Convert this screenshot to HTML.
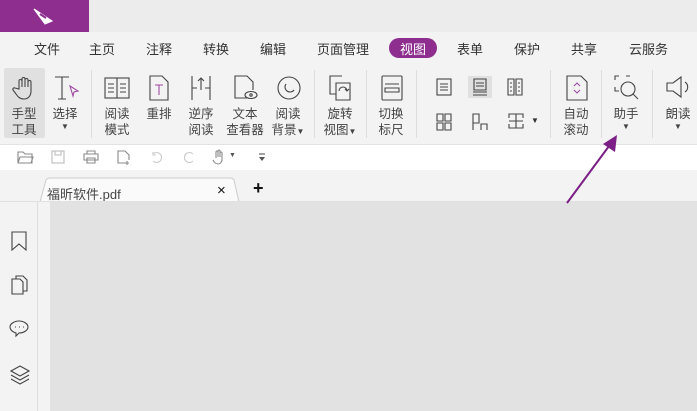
<!DOCTYPE html>
<html><head><meta charset="utf-8"><style>
*{margin:0;padding:0;box-sizing:border-box}
body{width:697px;height:411px;overflow:hidden;background:#f3f3f3;font-family:"Liberation Sans","Noto Sans CJK SC",sans-serif;position:relative;color:#333}
.a{position:absolute}
.m{position:absolute;top:39px;font-size:13px;color:#333}
.t{position:absolute;font-size:12.5px;color:#444;text-align:center;line-height:16px;width:44px}
.sep{position:absolute;top:70px;width:1px;height:68px;background:#ddd}
svg{position:absolute;fill:none;stroke:#444;stroke-width:1.1}
.car{font-size:8px;display:block;line-height:10px}
</style></head><body>
<div class="a" style="left:0;top:0;width:697px;height:32px;background:#ececec"></div>
<div class="a" style="left:0;top:0;width:89px;height:32px;background:#8e2f8f"></div>
<svg style="left:32px;top:6px" width="24" height="20" viewBox="0 0 24 20"><path d="M2 3 L20 15 L13 18 Z" fill="#fff" stroke="#fff"/><path d="M8 8 L14 12" stroke="#8e2f8f" stroke-width="2"/></svg>

<span class="m" style="left:34px">文件</span>
<span class="m" style="left:89px">主页</span>
<span class="m" style="left:146px">注释</span>
<span class="m" style="left:203px">转换</span>
<span class="m" style="left:260px">编辑</span>
<span class="m" style="left:317px">页面管理</span>
<div class="a" style="left:389px;top:38px;width:48px;height:20px;border-radius:10px;background:#8e2f8f"></div>
<span class="m" style="left:400px;color:#fff">视图</span>
<span class="m" style="left:457px">表单</span>
<span class="m" style="left:514px">保护</span>
<span class="m" style="left:571px">共享</span>
<span class="m" style="left:629px">云服务</span>

<div class="a" style="left:4px;top:68px;width:41px;height:70px;background:#e0e0e0;border-radius:2px"></div>
<svg style="left:12px;top:75px" width="26" height="26" viewBox="0 0 26 26"><path d="M7 14V6a1.5 1.5 0 013 0v6V4a1.5 1.5 0 013 0v8V5a1.5 1.5 0 013 0v7V7a1.5 1.5 0 013 0v9c0 5-3 8-7 8s-6-2-8-5l-3-4a1.5 1.5 0 012-2z"/></svg>
<div class="t" style="left:2px;top:106px">手型<br>工具</div>
<svg style="left:53px;top:75px" width="28" height="26" viewBox="0 0 28 26"><path d="M2 2h14M9 2v22M5 24h8"/><path d="M17 11l8 5-4 1-1 4z" stroke="#a04aa5"/></svg>
<div class="t" style="left:43px;top:106px">选择<span class="car">▼</span></div>
<div class="sep" style="left:91px"></div>
<svg style="left:104px;top:76px" width="26" height="24" viewBox="0 0 26 24"><rect x="1" y="2" width="24" height="20"/><path d="M13 2v20M4 8h6M4 12h6M4 16h6M16 8h6M16 12h6M16 16h6"/></svg>
<div class="t" style="left:95px;top:106px">阅读<br>模式</div>
<svg style="left:149px;top:75px" width="20" height="26" viewBox="0 0 20 26"><path d="M1 1h12l6 6v18H1z"/><path d="M6 10h8M10 10v10" stroke="#a04aa5"/></svg>
<div class="t" style="left:137px;top:106px">重排</div>
<svg style="left:190px;top:75px" width="22" height="26" viewBox="0 0 22 26"><path d="M2 1v24M20 1v24M2 13h5M15 13h5M11 3v12M8 6l3-3 3 3"/></svg>
<div class="t" style="left:179px;top:106px">逆序<br>阅读</div>
<svg style="left:234px;top:75px" width="24" height="26" viewBox="0 0 24 26"><path d="M13 23H1V1h12l6 6v8"/><ellipse cx="17" cy="20" rx="6" ry="3.5"/><circle cx="17" cy="20" r="1.2"/></svg>
<div class="t" style="left:223px;top:106px">文本<br>查看器</div>
<svg style="left:276px;top:76px" width="26" height="24" viewBox="0 0 26 24"><circle cx="13" cy="12" r="11"/><path d="M10 8a5 5 0 108 6 4 4 0 01-8-6z"/></svg>
<div class="t" style="left:266px;top:106px">阅读<br>背景<span style="font-size:8px">▼</span></div>
<div class="sep" style="left:314px"></div>
<svg style="left:328px;top:75px" width="24" height="26" viewBox="0 0 24 26"><path d="M14 1H2v18h6M8 8h14v17H8z"/><path d="M11 16a4 4 0 018 0M17 14l2 2 2-2"/></svg>
<div class="t" style="left:318px;top:106px">旋转<br>视图<span style="font-size:8px">▼</span></div>
<div class="sep" style="left:366px"></div>
<svg style="left:381px;top:75px" width="22" height="26" viewBox="0 0 22 26"><rect x="1" y="1" width="20" height="24" rx="1"/><path d="M4 9h14M4 13h14v4H4z"/></svg>
<div class="t" style="left:369px;top:106px">切换<br>标尺</div>
<div class="sep" style="left:416px"></div>
<svg style="left:436px;top:78px" width="16" height="18" viewBox="0 0 16 18"><rect x="1" y="1" width="14" height="16"/><path d="M4 6h8M4 9h8M4 12h8"/></svg>
<div class="a" style="left:468px;top:76px;width:24px;height:22px;background:#e0e0e0"></div>
<svg style="left:472px;top:78px" width="16" height="18" viewBox="0 0 16 18"><path d="M2 1h12v11H2zM4 5h8M4 8h8M1 14h14M1 17h14"/></svg>
<svg style="left:507px;top:78px" width="16" height="18" viewBox="0 0 16 18"><path d="M1 1h6v16H1zM9 1h6v16H9zM3 5h2M3 9h2M3 13h2M11 5h2M11 9h2M11 13h2"/></svg>
<svg style="left:436px;top:113px" width="16" height="18" viewBox="0 0 16 18"><path d="M1 1h6v7H1zM9 1h6v7H9zM1 10h6v7H1zM9 10h6v7H9z"/></svg>
<svg style="left:472px;top:113px" width="16" height="18" viewBox="0 0 16 18"><path d="M1 17V1h6v9H1M9 17v-6h6v6"/></svg>
<svg style="left:508px;top:113px" width="16" height="16" viewBox="0 0 16 16"><path d="M1 5V1h14v4M1 11v4h14v-4M8 1v14M1 8h14"/></svg>
<span class="a" style="left:531px;top:116px;font-size:8px">▼</span>
<div class="sep" style="left:550px"></div>
<svg style="left:566px;top:75px" width="22" height="26" viewBox="0 0 22 26"><path d="M1 1h14l6 6v18H1z"/><path d="M8 11l3-3 3 3M8 15l3 3 3-3" stroke="#a04aa5"/></svg>
<div class="t" style="left:554px;top:106px">自动<br>滚动</div>
<div class="sep" style="left:601px"></div>
<svg style="left:614px;top:75px" width="26" height="26" viewBox="0 0 26 26"><path d="M1 5V1h4M12 1h4M1 12v4h4"/><circle cx="14" cy="14" r="7"/><path d="M19 19l5 5"/></svg>
<div class="t" style="left:604px;top:106px">助手<span class="car">▼</span></div>
<div class="sep" style="left:652px"></div>
<svg style="left:666px;top:75px" width="26" height="24" viewBox="0 0 26 24"><path d="M1 8h6l8-6v20l-8-6H1z"/><path d="M19 7a6 6 0 010 10"/></svg>
<div class="t" style="left:656px;top:106px">朗读<span class="car">▼</span></div>

<div class="a" style="left:0;top:144px;width:697px;height:26px;background:#fff;border-top:1px solid #e3e3e3"></div>
<svg style="left:17px;top:151px;stroke:#888" width="17" height="13" viewBox="0 0 17 13"><path d="M1 12V1h5l2 2h7v9zM1 12l2-6h13l-2 6"/></svg>
<svg style="left:51px;top:150px;stroke:#bbb" width="14" height="14" viewBox="0 0 14 14"><rect x="1" y="1" width="12" height="12"/><path d="M4 1v4h6V1"/></svg>
<svg style="left:83px;top:150px;stroke:#888" width="16" height="14" viewBox="0 0 16 14"><path d="M4 4V1h8v3M1 4h14v6H1zM4 8h8v5H4z"/></svg>
<svg style="left:117px;top:150px;stroke:#888" width="14" height="15" viewBox="0 0 14 15"><path d="M9 13H1V1h7l4 4v5M10 11v4M8 13h4"/></svg>
<svg style="left:150px;top:151px;stroke:#ccc" width="12" height="12" viewBox="0 0 12 12"><path d="M3 3a5 5 0 110 7M3 1v3h3"/></svg>
<svg style="left:184px;top:151px;stroke:#ccc" width="12" height="12" viewBox="0 0 12 12"><path d="M9 3a5 5 0 100 7"/></svg>
<svg style="left:212px;top:149px;stroke:#888" width="14" height="16" viewBox="0 0 14 16"><path d="M4 9V3a1 1 0 012 0v5V2a1 1 0 012 0v6V4a1 1 0 012 0v7c0 2-2 4-4 4s-4-2-5-4"/></svg>
<span class="a" style="left:229px;top:152px;font-size:7px;color:#555">▼</span>
<svg style="left:258px;top:153px;stroke:#555" width="8" height="9" viewBox="0 0 8 9"><path d="M1 1h6"/><path d="M1 4h6L4 8z" fill="#555" stroke="none"/></svg>

<svg style="left:40px;top:177px;stroke:#ccc;stroke-width:1" width="200" height="25" viewBox="0 0 200 25"><path d="M0 25L6 3Q7 1 10 1H190Q193 1 194 3L199 25" fill="#fafafa"/></svg>
<span class="a" style="left:47px;top:184px;font-size:13px;color:#444">福昕软件.pdf</span>
<span class="a" style="left:217px;top:182px;font-size:15px;color:#111">×</span>
<span class="a" style="left:253px;top:178px;font-size:18px;color:#111;font-weight:bold">+</span>
<div class="a" style="left:0;top:201px;width:697px;height:1px;background:#e0e0e0"></div>
<div class="a" style="left:37px;top:202px;width:1px;height:209px;background:#ddd"></div>
<div class="a" style="left:50px;top:202px;width:647px;height:209px;background:#e2e2e2"></div>
<svg style="left:11px;top:231px" width="16" height="20" viewBox="0 0 16 20"><path d="M1 1h14v18l-7-6-7 6z"/></svg>
<svg style="left:11px;top:275px" width="17" height="20" viewBox="0 0 17 20"><path d="M5 4V1h7l4 4v11h-4M1 4h8l3 3v12H1z"/></svg>
<svg style="left:9px;top:320px" width="20" height="18" viewBox="0 0 20 18"><path d="M10 1c5 0 9 3 9 6s-4 6-9 6l-3 3v-3c-3-1-6-3-6-6 0-3 4-6 9-6z"/><path d="M6 7h1M10 7h1M14 7h1"/></svg>
<svg style="left:10px;top:365px" width="20" height="20" viewBox="0 0 20 20"><path d="M10 1l9 5-9 5-9-5zM1 10l9 5 9-5M1 14l9 5 9-5"/></svg>

<svg style="left:560px;top:130px;stroke:#7b1f86;stroke-width:2" width="70" height="80" viewBox="0 0 70 80"><path d="M7 73L52 12"/><path d="M57 5L43 14L55 22Z" fill="#7b1f86" stroke="none"/></svg>
</body></html>
